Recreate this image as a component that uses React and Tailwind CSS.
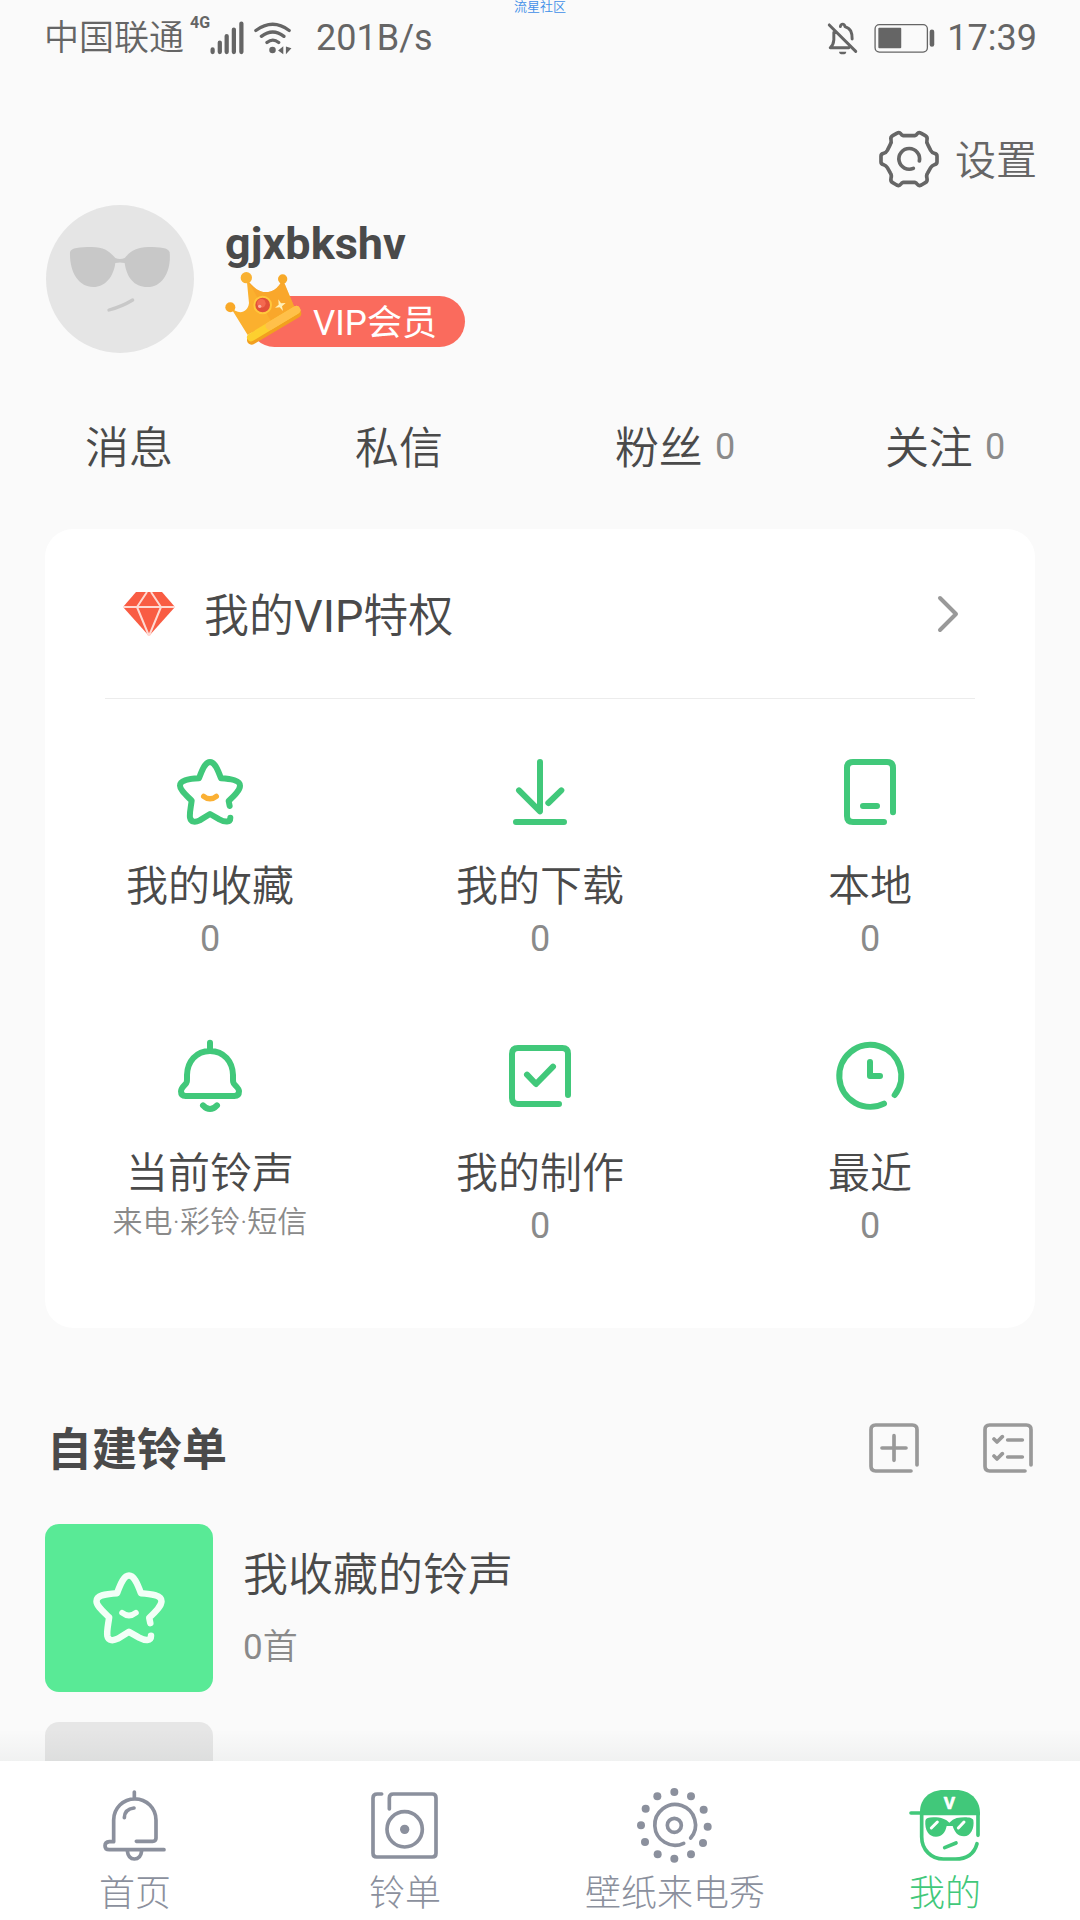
import React from "react";

function Icon({ box, className, width = 18, children }) {
  return (
    <svg
      viewBox={box}
      className={`block shrink-0 overflow-visible ${className}`}
      fill="none"
      stroke="currentColor"
      strokeWidth={width}
      strokeLinecap="round"
      strokeLinejoin="round"
      aria-hidden="true"
    >
      {children}
    </svg>
  );
}

function StarIcon({ className, smile }) {
  return (
    <Icon box="222 48 216 216" className={className}>
      <path d="M389 198L386 183C405 165 420 150 420 137C420 122 395 117 363 115C352 85 343 66 330 66C317 66 308 85 297 115C262 117 240 122 240 137C240 150 258 165 275 182C272 205 268 220 270 233C273 248 287 247 299 241L330 222L358 238C375 247 391 248 391 233" />
      <path d="M311 169Q330 184 349 169" stroke={smile} strokeWidth="16" />
    </Icon>
  );
}

function StatusBar() {
  return (
    <div className="flex h-[76px] shrink-0 items-center justify-between pl-11 pr-[43px] text-[#656565]">
      <div className="flex items-center">
        <span className="pt-0.5 text-[35px] leading-[48px]">中国联通</span>
        <span className="ml-1.5 self-start text-[16px] font-bold leading-5">4G</span>
        <Icon box="610 55 102 104" className="h-[34px] w-[34px]" width={13}>
          <path d="M617 142V150M639 121V150M660 101V150M682 81V150M705 63V150" />
        </Icon>
        <Icon box="740 55 115 104" className="ml-2.5 h-[34px] w-[38px]" width={10}>
          <path d="M745 84Q797 46 847 84M762 102Q797 75 831 102M779 121Q797 106 815 121" />
          <circle cx="796" cy="144" r="10" fill="currentColor" stroke="none" />
          <path d="M813 145L829 132V157ZM837 133V157L854 138Z" fill="currentColor" stroke="none" />
        </Icon>
        <span className="ml-6 text-4xl font-normal leading-[48px]">201B/s</span>
      </div>
      <div className="flex items-center">
        <Icon box="150 57 93 104" className="h-[34px] w-[31px]" width={9}>
          <path d="M156 69L237 150M170 92V115Q169 130 159 139H216M190 74C192 64 202 64 204 74C222 80 226 92 226 112" />
          <path d="M186 151A11 8 0 0 0 208 151Z" fill="currentColor" stroke="none" />
        </Icon>
        <Icon box="293 57 184 104" className="ml-4 h-[34px] w-[61px]" width={4}>
          <rect x="295" y="68" width="160" height="84" rx="13" />
          <rect x="305" y="78" width="70" height="62" rx="3" fill="currentColor" stroke="none" />
          <rect x="462" y="83" width="14" height="53" rx="7" fill="currentColor" stroke="none" />
        </Icon>
        <span className="ml-3 text-4xl font-normal leading-[48px]">17:39</span>
      </div>
    </div>
  );
}

function Avatar() {
  return (
    <svg viewBox="48 45 444 444" className="block size-[148px] shrink-0" role="img" aria-label="头像">
      <circle cx="270" cy="267" r="222" fill="#e5e5e5" />
      <path
        fill="#c8c8c8"
        d="M120 187C122 173 150 171 185 171C225 171 240 186 256 204Q270 210 284 204C300 185 320 171 355 171C390 171 415 173 419 187C424 240 400 291 352 291C312 291 290 262 284 219Q270 216 256 219C250 262 225 291 190 291C145 291 118 245 120 187Z"
      />
      <path d="M237 360Q275 350 308 330" fill="none" stroke="#c8c8c8" strokeWidth="10" strokeLinecap="round" />
    </svg>
  );
}

function Crown() {
  return (
    <svg viewBox="584 244 234 225" className="absolute -left-6 -top-[25px] h-[75px] w-[78px]" aria-hidden="true">
      <path fill="#fbb02e" d="M600 352C622 376 652 372 656 340L649 268C676 306 706 316 732 300Q748 290 757 268L792 352L652 436Z" />
      <path fill="#f9a12a" d="M649 268C676 306 706 316 732 300Q748 290 757 268L792 352L722 394Z" opacity="0.6" />
      <circle cx="648" cy="264" r="17" fill="#f9b233" />
      <circle cx="757" cy="268" r="14" fill="#f7a928" />
      <circle cx="600" cy="353" r="15" fill="#f9a928" />
      <path d="M664 451L799 371" stroke="#f2a01f" strokeWidth="28" strokeLinecap="round" />
      <path d="M662 443L798 361" stroke="#fdd02f" strokeWidth="24" strokeLinecap="round" />
      <path d="M718 409L798 361" stroke="#ffc04a" strokeWidth="24" strokeLinecap="round" />
      <circle cx="697" cy="346" r="25" fill="#e2503a" stroke="#ffc83c" strokeWidth="6" />
      <circle cx="693" cy="341" r="13" fill="#f4694f" />
      <circle cx="688" cy="350" r="5" fill="#fbb3a5" />
      <path fill="#fff0b8" d="M744 329L752 341L766 340L755 350L758 364L748 353L734 354L745 345Z" />
    </svg>
  );
}

const stats = [
  { label: "消息", count: "" },
  { label: "私信", count: "" },
  { label: "粉丝", count: "0" },
  { label: "关注", count: "0" },
];

const tools = [
  {
    label: "我的收藏",
    note: "0",
    icon: <StarIcon className="size-[72px]" smile="#fbb034" />,
  },
  {
    label: "我的下载",
    note: "0",
    icon: (
      <Icon box="1212 48 216 216" className="size-[72px]">
        <path d="M1257 151L1320 214V66M1384 151L1345 189M1248 246H1392" />
      </Icon>
    ),
  },
  {
    label: "本地",
    note: "0",
    icon: (
      <Icon box="282 48 216 216" className="size-[72px]">
        <path d="M459 217V84Q459 66 441 66H339Q321 66 321 84V228Q321 246 339 246H432M369 198H411" />
      </Icon>
    ),
  },
  {
    label: "当前铃声",
    note: "来电·彩铃·短信",
    small: true,
    icon: (
      <Icon box="222 69 216 216" className="size-[72px]">
        <path d="M330 68V92M330 93C288 93 262 125 261 165C261 185 262 187 255 194C246 203 243 207 243 214Q243 228 257 228H403Q417 228 417 214C417 207 412 202 405 195C398 188 399 185 399 165C398 125 372 93 330 93ZM309 256Q330 278 351 256" />
      </Icon>
    ),
  },
  {
    label: "我的制作",
    note: "0",
    icon: (
      <Icon box="1212 69 216 216" className="size-[72px]">
        <path d="M1404 225V101Q1404 84 1387 84H1254Q1236 84 1236 102V234Q1236 252 1254 252H1377M1281 164L1308 192L1359 140" />
      </Icon>
    ),
  },
  {
    label: "最近",
    note: "0",
    icon: (
      <Icon box="282 909 216 216" className="size-[72px]">
        <path d="M464 1065A93 93 0 1 0 432 1091M390 966V1008H420" />
      </Icon>
    ),
  },
];

const dots = [
  [343, 66], [393, 79], [431, 119], [443, 170], [429, 219], [393, 253],
  [343, 266], [293, 253], [255, 216], [243, 166], [257, 116], [292, 79],
];

const tabs = [
  {
    label: "首页",
    icon: (
      <Icon box="117 54 216 216" className="size-[72px]" width={11}>
        <path d="M223 66V87M161 215V150A63.500 63.500 0 0 1 288 150V204Q288 214 278 214H229M161 215H148Q135 216 135 227Q135 239 148 239H312M202 243C204 259 212 267 223 267C235 267 243 259 245 243M193 143Q194 117 222 114" />
      </Icon>
    ),
  },
  {
    label: "铃单",
    icon: (
      <Icon box="927 54 216 216" className="size-[72px]" width={11}>
        <path d="M965 72H952Q939 72 939 84V250Q939 261 950 261H1117Q1128 261 1128 250V84Q1128 72 1117 72H1000Q988 72 988 84V117" />
        <circle cx="1034" cy="178" r="53" />
        <circle cx="1034" cy="178" r="14" fill="currentColor" stroke="none" />
      </Icon>
    ),
  },
  {
    label: "壁纸来电秀",
    icon: (
      <Icon box="237 54 216 216" className="size-[72px]" width={11}>
        <path d="M392 204A61 61 0 1 0 371 220" />
        <circle cx="343" cy="166" r="21" />
        {dots.map(([x, y]) => (
          <circle key={`${x}-${y}`} cx={x} cy={y} r="12" fill="currentColor" stroke="none" />
        ))}
      </Icon>
    ),
  },
  {
    label: "我的",
    active: true,
    icon: (
      <Icon box="1047 54 216 216" className="size-[72px]" width={11}>
        <path d="M1080 136V125C1080 86 1110 60 1150 60H1188C1230 60 1259 88 1260 128V136Z" fill="currentColor" stroke="none" />
        <path d="M1053 129H1085V200C1085 240 1115 267 1150 267H1186C1220 267 1243 250 1251 221M1254 130V196" />
        <path
          d="M1096 152Q1098 142 1120 142C1145 142 1158 148 1168 158Q1178 148 1190 144C1210 141 1235 140 1240 150C1244 175 1232 199 1212 199C1192 199 1183 184 1178 168H1160C1156 188 1146 200 1128 200C1106 200 1094 180 1096 152Z"
          fill="currentColor"
          stroke="none"
        />
        <path d="M1114 174L1132 156M1195 174L1212 156" stroke="#fff" strokeWidth="9" />
        <path d="M1154 233L1188 219" />
        <text x="1168" y="117" textAnchor="middle" fontSize="52" fontWeight="700" fill="#fff" stroke="#fff" strokeWidth="2">
          V
        </text>
      </Icon>
    ),
  },
];

export default function App() {
  return (
    <div className="relative flex h-screen flex-col overflow-hidden bg-[#fafafa] font-['Roboto','Noto_Sans_CJK_SC',sans-serif] font-[350] text-[#4a4a4a]">
      <span className="absolute inset-x-0 top-0 text-center text-[13px] leading-[13px] text-[#3f8fe8]">流星社区</span>
      <StatusBar />

      <main className="relative min-h-0 flex-1 overflow-hidden">
        <div className="flex justify-end pr-[43px] pt-[53px]">
          <button type="button" className="flex h-[60px] items-center gap-4 text-[#666]">
            <Icon box="297 388 180 180" className="size-[60px]" width={11}>
              <path d="M370 408H404Q409 407 412 402Q416 397 424 401L436 408Q443 412 441 420Q439 428 443 434L452 452Q456 459 463 461Q471 462 471 469V487Q471 494 463 495Q456 497 452 504L443 520Q438 527 441 536Q443 545 436 549L424 556Q416 560 412 554Q409 549 404 548H370Q365 549 362 554Q358 560 350 556L338 549Q331 545 333 536Q336 527 331 520L322 504Q318 497 311 495Q303 494 303 487V469Q303 462 311 461Q318 459 322 452L331 434Q335 428 333 420Q331 412 338 408L350 401Q358 397 362 402Q365 407 370 408Z" />
              <path d="M418 484A31 31 0 1 0 400 506" />
            </Icon>
            <span className="pt-1 text-[41px] leading-[60px]">设置</span>
          </button>
        </div>

        <section className="mt-4 flex gap-[31px] px-[46px]">
          <Avatar />
          <div className="pt-3">
            <h1 className="text-[45px] font-bold leading-[54px]">gjxbkshv</h1>
            <button type="button" className="relative ml-6 mt-[25px] flex h-[51px] items-center rounded-full bg-[#fa6b5d] pl-16 pr-7 pt-1 text-[35px] font-normal leading-[51px] text-white">
              <Crown />
              VIP会员
            </button>
          </div>
        </section>

        <nav className="mt-[60px] grid grid-cols-4">
          {stats.map((s) => (
            <a key={s.label} href="#" className="flex h-[68px] items-center justify-center gap-3">
              <span className="pt-1 text-[44px] leading-[68px]">{s.label}</span>
              <span className="text-4xl font-normal text-[#8a8a8a]">{s.count}</span>
            </a>
          ))}
        </nav>

        <section className="mx-[45px] mt-12 rounded-[28px] bg-white pb-[78px]">
          <a href="#" className="mx-[60px] flex h-[170px] items-center border-b border-[#ececec] px-[18px]">
            <svg viewBox="0 0 52 44" className="block h-11 w-[52px]" aria-hidden="true">
              <path d="M13 0H39L52 15L26 44L0 15Z" fill="#f95c43" />
              <path d="M0 15H52M24 0L14 15L26 44L38 15L28 0" fill="none" stroke="#ffd9d2" strokeWidth="2" />
            </svg>
            <span className="ml-[29px] flex-1 pt-1.5 text-[45px] leading-[60px]">
              我的<span className="font-normal">VIP</span>特权
            </span>
            <Icon box="0 0 18 34" className="h-[34px] w-[18px]" width={4}>
              <path d="M1 1L17 17L1 33" stroke="#999" />
            </Icon>
          </a>
          <div className="grid grid-cols-3 gap-y-20 pt-[57px]">
            {tools.map((t) => (
              <a key={t.label} href="#" className="flex flex-col items-center text-[#41c87a]">
                {t.icon}
                <span className="mt-[31px] text-[42px] leading-[56px] text-[#4a4a4a]">{t.label}</span>
                {t.small ? (
                  <span className="text-[30px] leading-10 text-[#8a8a8a]">{t.note}</span>
                ) : (
                  <span className="text-4xl font-normal leading-[48px] text-[#8a8a8a]">{t.note}</span>
                )}
              </a>
            ))}
          </div>
        </section>

        <section className="px-[45px] pt-[88px]">
          <div className="flex h-16 items-center pr-0.5">
            <h2 className="ml-0.5 flex-1 pt-1.5 text-[45px] font-bold leading-[64px]">自建铃单</h2>
            <button type="button" aria-label="新建铃单" className="text-[#999]">
              <Icon box="87 66 150 150" className="size-[50px]" width={11}>
                <path d="M231 192V86Q231 72 217 72H107Q93 72 93 86V196Q93 210 107 210H213M162 104V178M126 141H198" />
              </Icon>
            </button>
            <button type="button" aria-label="管理铃单" className="ml-16 text-[#999]">
              <Icon box="429 66 150 150" className="size-[50px]" width={11}>
                <path d="M573 192V86Q573 72 559 72H449Q435 72 435 86V196Q435 210 449 210H555M462 114L471 123L487 107M503 117H547M462 165L471 174L487 158M503 168H547" />
              </Icon>
            </button>
          </div>
          <a href="#" className="mt-11 flex">
            <span className="flex size-[168px] items-center justify-center rounded-[14px] bg-[#59ea96] text-[#f2fff7]">
              <StarIcon className="size-[78px]" smile="currentColor" />
            </span>
            <span className="ml-[30px] flex flex-col pt-[22px]">
              <span className="text-[45px] leading-[60px]">我收藏的铃声</span>
              <span className="mt-4 text-[35px] leading-[52px] text-[#8a8a8a]">
                <span className="font-normal">0</span>首
              </span>
            </span>
          </a>
          <div className="mt-[30px] size-[168px] rounded-[14px] bg-[#e6e6e6]" />
        </section>
        <div className="pointer-events-none absolute inset-x-0 bottom-0 h-8 bg-linear-to-b from-transparent to-[#00201a]/4" />
      </main>

      <nav className="grid h-[159px] shrink-0 grid-cols-4 bg-white pt-[27px]">
        {tabs.map((t) => (
          <a
            key={t.label}
            href="#"
            aria-current={t.active ? "page" : undefined}
            className={`flex flex-col items-center ${t.active ? "text-[#41c87a]" : "text-[#8b909d]"}`}
          >
            {t.icon}
            <span className="mt-2.5 text-4xl font-light leading-[48px]">{t.label}</span>
          </a>
        ))}
      </nav>
    </div>
  );
}
